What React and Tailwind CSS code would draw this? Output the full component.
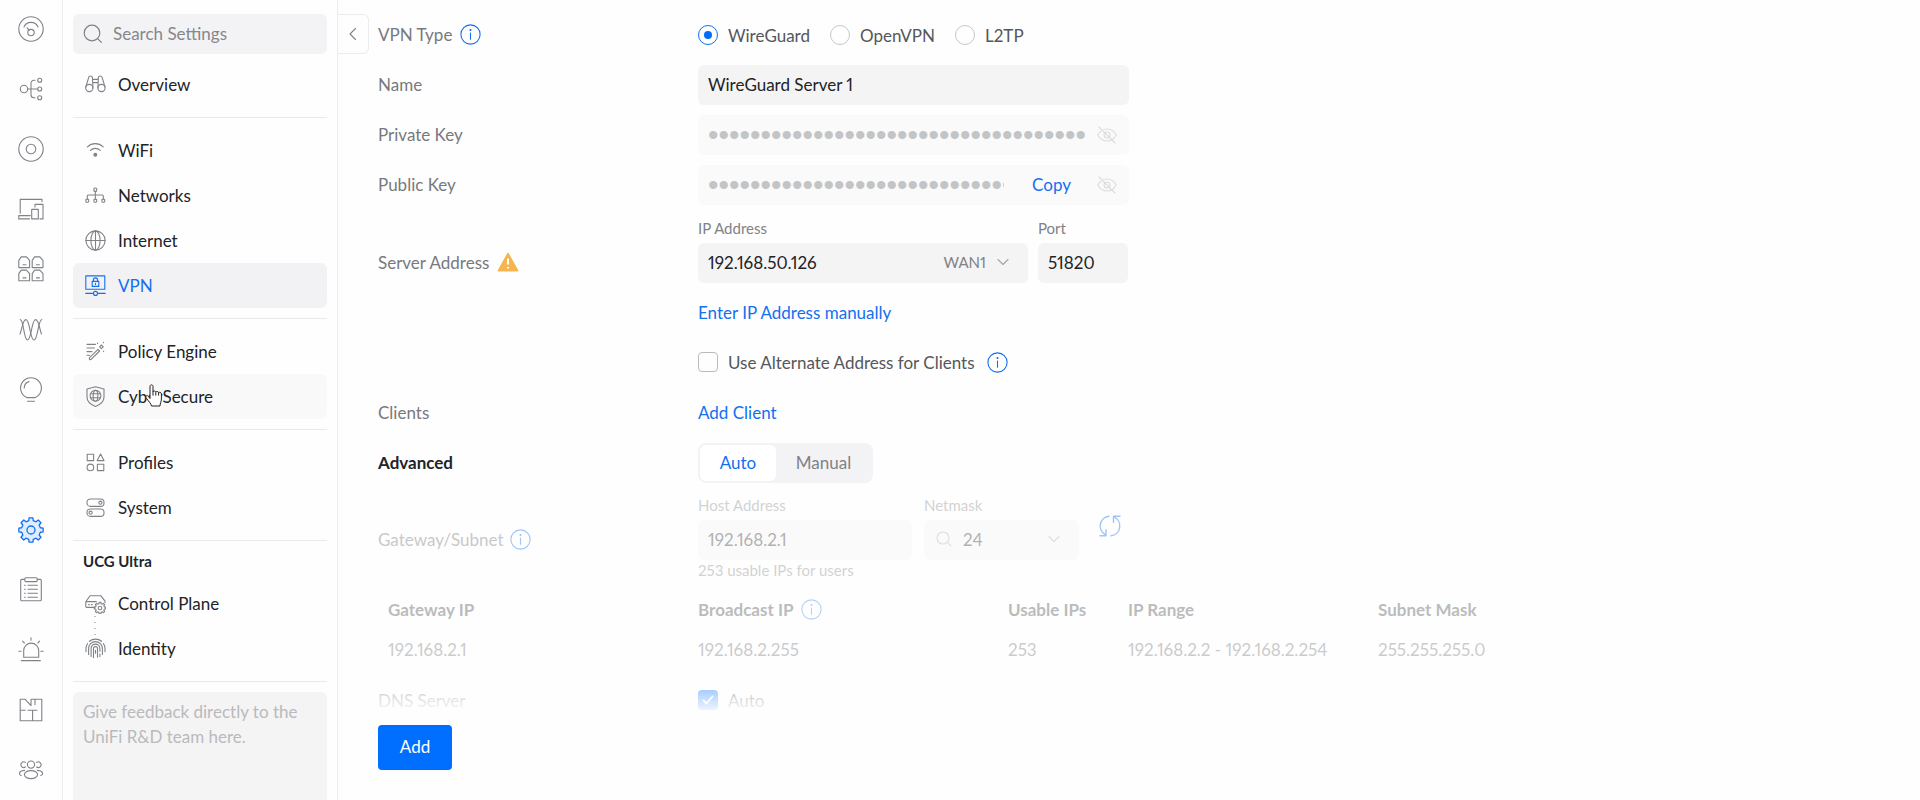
import React from "react";

function Icon({ box = 26, className = "", children, sw = 1.1 }) {
  return (
    <svg
      viewBox={`0 0 ${box} ${box}`}
      width={box}
      height={box}
      fill="none"
      stroke="currentColor"
      strokeWidth={sw}
      strokeLinecap="round"
      strokeLinejoin="round"
      aria-hidden="true"
      className={"shrink-0 " + className}
    >
      {children}
    </svg>
  );
}

function gearPath(c, outer, inner, teeth) {
  const pts = [];
  const step = (Math.PI * 2) / teeth;
  for (let i = 0; i < teeth; i++) {
    const a = i * step - Math.PI / 2;
    [[-0.3, inner], [-0.2, outer], [0.2, outer], [0.3, inner]].forEach(([f, r]) => {
      pts.push(`${(c + Math.cos(a + f * step) * r).toFixed(2)} ${(c + Math.sin(a + f * step) * r).toFixed(2)}`);
    });
  }
  return "M" + pts.join("L") + "Z";
}

const railTop = [
  ["Dashboard", <><circle cx="13" cy="13" r="12.2" /><path d="M6 11A7.6 7.6 0 0 1 20 11M9.2 11.8l1.8 2.4" /><circle cx="13" cy="16.6" r="3.2" /></>],
  ["Topology", <><circle cx="6" cy="13" r="3.7" /><path d="M9.7 13h10M17 4.3h-1a3 3 0 0 0-3 3v11.4a3 3 0 0 0 3 3h1" /><circle cx="21.7" cy="4.3" r="2" /><circle cx="21.7" cy="13" r="2" /><circle cx="21.7" cy="21.7" r="2" /></>],
  ["UniFi Devices", <><circle cx="13" cy="13" r="12.2" /><circle cx="13" cy="13" r="4.8" /></>],
  ["Client Devices", <><path d="M2.2 17.3V3.4H24v2.2M.8 19.6h11.4M.8 19.6v3.3h10.6M17 11V8.4h8v14.5h-3" /><rect x="13.7" y="13.4" width="6.6" height="9.5" /></>],
  ["Ports", <>{[[0, 0], [13.4, 0], [0, 13.2], [13.4, 13.2]].map(([x, y]) => <path key={x + "-" + y} transform={`translate(${x} ${y})`} d="M.8 11.6V4.4L3.2.9h5.2l3.2 3.5v7.2zM5 8.7h3" />)}</>],
  ["Radios", <><path d="M2.200 3.600C6 3.600 5.500 24 9.500 24S13.500 3.600 17.500 3.600c3.500 0 4 10 6 14.400" /><path d="M2 18C4 13.600 4.500 3.600 8 3.600c4 0 4 20.400 8 20.400S20 3.600 23.800 3.600" /></>],
  ["Insights", <><path d="M8.8 21.6A10.4 10.4 0 1 1 17.2 21.6zM9.5 25.2h7" /><path d="M6.2 12A6.8 6.8 0 0 1 11 5.6" /></>],
];

const railBottom = [
  ["Logs", <><rect x="2.7" y="2.4" width="20.6" height="21.4" rx="1" /><rect x="6.8" y=".8" width="12.4" height="3.8" rx="1" fill="#fefefe" /><path d="M10 8.2h9.4M10 12.2h9.4M10 16.2h9.4M10 20.2h9.4M6.4 8.2h.8M6.4 12.2h.8M6.4 16.2h.8M6.4 20.2h.8" /></>],
  ["Alarms", <><path d="M5.7 20.2v-6.6a7.5 7.5 0 0 1 15 0v6.6zM3.4 23.6h19M13 .8v2.4M4.6 4.2l1.8 1.8M21.6 4.2l-1.8 1.8M.8 14.2h2.4M22.8 14.2h2.4" /></>],
  ["Floorplans", <><path d="M7 2.2H2.2v21.6h21.6V2.2H17v5.4M7 2.2l6 6.4V2.2h4M2.2 13.2h5M10 13.2h9M14.6 13.2v10.6" /></>],
  ["People", <><circle cx="13" cy="7.6" r="3.6" /><ellipse cx="13" cy="17.6" rx="6.6" ry="4" /><path d="M7.4 5.4a2.8 2.8 0 1 0 0 4.6M18.6 5.4a2.8 2.8 0 1 1 0 4.6M6.6 13.4c-3 .2-5.2 1.6-5.2 3.4 0 .8.8 1.4 1.8 1.8M19.4 13.4c3 .2 5.2 1.6 5.2 3.4 0 .8-.8 1.4-1.8 1.8" /></>],
];

const overviewIcon = <><circle cx="4.3" cy="14" r="3.6" /><circle cx="16.5" cy="14" r="3.6" /><path d="M.8 13 3.8 3.2C4.2 1.8 7 1.6 7.4 3.2L7.9 14M20 13 17 3.2c-.4-1.4-3.2-1.6-3.6 0L12.9 14M7.6 5.4h5.6M7.7 8.6h5.4" /></>;
const wifiIcon = <><path d="M2.4 6.8a11.4 11.4 0 0 1 15.8 0M5.4 10.4a7 7 0 0 1 9.8 0" /><circle cx="10.3" cy="14.8" r="1.4" fill="currentColor" /></>;
const networksIcon = <><rect x="8.9" y="3" width="2.8" height="3.4" rx="1" /><path d="M10.3 6.4v7.8M2.3 14.2V11c0-.8.2-1 1-1h14c.8 0 1 .2 1 1v3.2" /><rect x=".9" y="14.2" width="2.8" height="3" rx=".6" /><rect x="8.9" y="14.2" width="2.8" height="3" rx=".6" /><rect x="16.9" y="14.2" width="2.8" height="3" rx=".6" /></>;
const internetIcon = <><circle cx="10.5" cy="10.5" r="9.6" /><ellipse cx="10.5" cy="10.5" rx="4.6" ry="9.6" /><path d="M10.5.9v19.2M.9 10.5h19.2" /></>;
const vpnIcon = <><rect x=".8" y=".9" width="19" height="13.4" /><rect x="7.2" y="6.4" width="6.6" height="5" /><path d="M8.4 6.4V5a2.1 2.1 0 0 1 4.2 0v1.4M10.5 8.4v1M.8 18.4h7.6M12.6 18.4h7.6" /><circle cx="10.5" cy="18.4" r="2" /></>;
const policyIcon = <><path d="M2 3.4h8.4M2 7h7.4M2 10.6h5M2 14.2h2.6M4.6 16.6 13 8.4l1.6 1.6-8.4 8.4c-1.2.8-2.6-.6-1.6-1.8zM16.4 4l1.8 1.8-1.8 1.8-1.8-1.8zM12.6 2v.6M18.4 1.4v.4M18.6 10v.4" /></>;
const shieldIcon = <><path d="M10.5.8 19 3v8c0 4.4-3.6 7.6-8.500 9.4C5.600 18.600 2 15.400 2 11V3z" /><circle cx="10.5" cy="9.800" r="5.400" /><ellipse cx="10.500" cy="9.800" rx="2.400" ry="5.400" /><path d="M5.700 7.800h9.600M5.700 11.800h9.600" /></>;
const profilesIcon = <><rect x="2.200" y="2.200" width="6.400" height="6.400" /><path d="m15.600 2 3.400 6.600h-6.800z" /><circle cx="5.400" cy="15.400" r="3.300" /><rect x="12.400" y="12.200" width="6.400" height="6.400" /></>;
const systemIcon = <><rect x="2" y="2" width="17" height="7.400" rx="3.400" /><rect x="2" y="12" width="17" height="7.400" rx="3.400" /><circle cx="15.400" cy="5.700" r="1.600" /><circle cx="5.600" cy="15.700" r="1.600" /></>;
const controlIcon = <><path d="M9 14.400H1.600c-.5 0-.8-.3-.8-.8V8.800L5 2.800h11l4 5.400v1.400M.8 8.600h10.600M3.600 11.600h.8M6.400 11.600h.8" /><path d={gearPath(15, 5.8, 4.5, 8)} /><circle cx="15" cy="15" r="1.800" /></>;
const identityIcon = <><path d="M4.400 3.300a9.800 9.800 0 0 1 12.200 0M1 13.800v-3.300c0-1.800.6-3.600 1.600-5M18.400 5.500c1 1.400 1.600 3.200 1.600 5v3.300M3.600 16.400v-5.900a6.900 6.900 0 0 1 13.800 0v5.900M6.100 18.400v-7.900a4.400 4.400 0 0 1 8.800 0v2.800M8.500 19.600v-9a2 2 0 0 1 4 0v8.600M14.900 16v2.600M10.500 12.200v3" /></>;

function NavItem({ icon, label, state, children }) {
  const tone =
    state === "active" ? "bg-[#f2f2f4] text-[#146ff0]" : state === "hover" ? "bg-[#f9f9fa] text-[#212327]" : "text-[#212327]";
  return (
    <a href="#" className={"relative flex h-[45px] items-center gap-3 rounded-md pl-3 " + tone}>
      <Icon box={21} className={state === "active" ? "" : "text-[#7f8287]"}>{icon}</Icon>
      <span>{label}</span>
      {children}
    </a>
  );
}

function Divider() {
  return <hr className="my-[10px] h-px shrink-0 border-0 bg-[#e9eaeb]" />;
}

function Info() {
  return (
    <Icon box={21} className="text-[#146ff0]">
      <circle cx="10.500" cy="10.500" r="9.600" />
      <path d="M10.500 9v6.200" />
      <circle cx="10.500" cy="6" r=".5" fill="currentColor" />
    </Icon>
  );
}

function Eye() {
  return (
    <button type="button" aria-label="Show key" className="text-[#dcdcdd]">
      <Icon box={20}>
        <path d="M.8 10C3 6 6.200 4 10 4s7 2 9.200 6c-2.200 4-5.400 6-9.200 6S3 14 .8 10zM2 2l16 16" />
        <circle cx="10" cy="10" r="3" />
      </Icon>
    </button>
  );
}

function Chevron({ className = "" }) {
  return (
    <Icon box={14} className={className}>
      <path d="m2 4.500 5 5 5-5" />
    </Icon>
  );
}

function Row({ label, htmlFor, extra, children, align = "items-center" }) {
  return (
    <div className={"flex min-h-10 " + align}>
      <div className="flex h-10 w-80 shrink-0 items-center gap-2 pb-[2px] text-[#77797d]">
        <label htmlFor={htmlFor}>{label}</label>
        {extra}
      </div>
      {children}
    </div>
  );
}

function Radio({ label, checked }) {
  return (
    <label className="flex items-center gap-[10px] text-[#55575b]">
      <input
        type="radio"
        name="vpn-type"
        defaultChecked={checked}
        className="grid size-5 appearance-none place-items-center rounded-full border border-[#c6c7c9] before:size-2 before:rounded-full checked:border-[#146ff0] checked:before:bg-[#006fff]"
      />
      {label}
    </label>
  );
}

const masked = "0".repeat(44);
const keyInput = "h-10 min-w-0 flex-1 bg-transparent font-['Liberation_Sans',sans-serif] text-[30px] leading-[40px] text-[#c3c4c6] outline-none";

export default function App() {
  return (
    <div className="flex h-screen overflow-hidden bg-[#fefefe] font-['Lato',sans-serif] text-[17px] leading-[25px] text-[#212327] proportional-nums">
      <nav aria-label="Applications" className="flex w-[63px] shrink-0 flex-col items-center border-r border-[#ececed] pt-4 pb-[17px] text-[#7f8287]">
        <div className="flex flex-col gap-[34px]">
          {railTop.map(([name, art]) => (
            <a key={name} href="#" aria-label={name}><Icon>{art}</Icon></a>
          ))}
        </div>
        <div className="mt-auto flex flex-col gap-[34px]">
          <a href="#" aria-label="Settings" className="text-[#146ff0]">
            <Icon sw={1.300}>
              <path d={gearPath(13, 12.3, 9.6, 8)} fill="#e0edff" />
              <circle cx="13" cy="13" r="4" />
            </Icon>
          </a>
          {railBottom.map(([name, art]) => (
            <a key={name} href="#" aria-label={name}><Icon>{art}</Icon></a>
          ))}
        </div>
      </nav>

      <aside className="flex w-[275px] shrink-0 flex-col border-r border-[#ececed] px-[10px] pt-[14px]">
        <div className="relative mb-2 shrink-0">
          <Icon box={20} className="absolute top-[10px] left-[10px] text-[#7f8287]" sw={1.200}>
            <circle cx="9" cy="9" r="7.800" />
            <path d="m14.600 14.600 3.800 3.800" />
          </Icon>
          <input
            type="search"
            aria-label="Search Settings"
            placeholder="Search Settings"
            className="h-10 w-full rounded-md bg-[#f3f3f5] pr-3 pb-[2px] pl-10 outline-none placeholder:text-[#85878b]"
          />
        </div>
        <NavItem icon={overviewIcon} label="Overview" />
        <Divider />
        <NavItem icon={wifiIcon} label="WiFi" />
        <NavItem icon={networksIcon} label="Networks" />
        <NavItem icon={internetIcon} label="Internet" />
        <NavItem icon={vpnIcon} label="VPN" state="active" />
        <Divider />
        <NavItem icon={policyIcon} label="Policy Engine" />
        <NavItem icon={shieldIcon} label="CyberSecure" state="hover">
          <svg viewBox="0 0 20 24" width="20" height="24" aria-hidden="true" className="absolute top-[10px] left-[71px]">
            <path
              d="M6 14.500V2.400C6 .4 9 .4 9 2.400V8c0-1.400 2.600-1.400 2.800.2.400-1.200 2.600-1 2.800.6.600-1 2.800-.6 2.800 1.200V15c0 3-1.400 4-1.400 7H7.500c-.4-2.400-2.600-4.400-5.400-8.200C1 12 3 10.800 4.400 12.400z"
              fill="#fff"
              stroke="#222"
              strokeWidth="1"
              strokeLinejoin="round"
            />
            <path d="M9 8v3.600M11.800 8.200v3.400M14.600 8.800v2.800" stroke="#222" strokeWidth="1" />
          </svg>
        </NavItem>
        <Divider />
        <NavItem icon={profilesIcon} label="Profiles" />
        <NavItem icon={systemIcon} label="System" />
        <hr className="mt-[10px] h-px shrink-0 border-0 bg-[#e9eaeb]" />
        <h2 className="flex h-10 shrink-0 items-center pl-[10px] text-[15px] font-bold">UCG Ultra</h2>
        <NavItem icon={controlIcon} label="Control Plane">
          <svg viewBox="0 0 2 20" width="2" height="20" aria-hidden="true" className="absolute top-[35px] left-[21px]">
            <path d="M1 0v20" stroke="#7f8287" strokeWidth="1" strokeDasharray="1 5" />
          </svg>
        </NavItem>
        <NavItem icon={identityIcon} label="Identity" />
        <Divider />
        <textarea
          aria-label="Feedback"
          placeholder="Give feedback directly to the UniFi R&D team here."
          className="min-h-0 flex-1 resize-none rounded-t-md bg-[#f4f4f5] px-[10px] pt-[7px] outline-none placeholder:text-[#b9babc]"
        />
      </aside>

      <main className="flex min-w-0 flex-1">
        <button type="button" aria-label="Collapse settings menu" className="mt-[14px] grid h-10 w-[31px] shrink-0 place-items-center rounded-r-md border border-l-0 border-[#ececed] text-[#7f8287]">
          <Icon box={14}><path d="M9.500 1.500 4 7l5.500 5.500" /></Icon>
        </button>

        <form className="flex min-w-0 flex-1 flex-col pl-[9px]" onSubmit={(e) => e.preventDefault()}>
          <div className="flex min-h-0 flex-1 flex-col gap-[10px] overflow-y-auto pt-[15px] [scrollbar-width:none]">
            <Row label="VPN Type" extra={<Info />}>
              <div className="flex gap-5">
                <Radio label="WireGuard" checked />
                <Radio label="OpenVPN" />
                <Radio label="L2TP" />
              </div>
            </Row>

            <Row label="Name" htmlFor="name">
              <input id="name" defaultValue="WireGuard Server 1" className="h-10 w-[431px] rounded-md bg-[#f4f4f5] px-[10px] pb-[2px] outline-none" />
            </Row>

            <Row label="Private Key" htmlFor="private-key">
              <div className="flex h-10 w-[431px] items-center gap-3 rounded-md bg-[#fafafb] pr-3 pl-[10px]">
                <input id="private-key" type="password" readOnly defaultValue={masked} className={keyInput} />
                <Eye />
              </div>
            </Row>

            <Row label="Public Key" htmlFor="public-key">
              <div className="flex h-10 w-[431px] items-center rounded-md bg-[#fafafb] pr-3 pl-[10px]">
                <input id="public-key" type="password" readOnly defaultValue={masked} className={keyInput} />
                <button type="button" className="mr-[26px] ml-7 pb-[2px] text-[#146ff0]">Copy</button>
                <Eye />
              </div>
            </Row>

            <Row
              label="Server Address"
              htmlFor="ip"
              align="items-end"
              extra={
                <svg viewBox="0 0 22 20" width="22" height="20" aria-hidden="true">
                  <path d="M11 1.500 20.600 18.600H1.400z" fill="#f5b54f" stroke="#f5b54f" strokeWidth="1.600" strokeLinejoin="round" />
                  <path d="M11 6.500v6M11 15v1.400" stroke="#fff" strokeWidth="2" />
                </svg>
              }
            >
              <div className="flex gap-[10px]">
                <div className="flex flex-col">
                  <label htmlFor="ip" className="h-7 text-[15px] leading-[27px] text-[#808286]">IP Address</label>
                  <div className="relative">
                    <select id="ip" className="h-10 w-[330px] appearance-none rounded-md bg-[#f4f4f5] px-[10px] pb-[2px] outline-none">
                      <option>192.168.50.126</option>
                    </select>
                    <div className="pointer-events-none absolute inset-y-0 right-[18px] flex items-center gap-[10px] pb-[2px] text-[15px] text-[#808286]">
                      WAN1
                      <Chevron className="text-[#a5a6a9]" />
                    </div>
                  </div>
                </div>
                <div className="flex flex-col">
                  <label htmlFor="port" className="h-7 text-[15px] leading-[27px] text-[#808286]">Port</label>
                  <input id="port" defaultValue="51820" className="h-10 w-[90px] rounded-md bg-[#f4f4f5] px-[10px] pb-[2px] outline-none" />
                </div>
              </div>
            </Row>

            <div className="flex h-10 shrink-0 items-center pb-[2px] pl-80">
              <a href="#" className="text-[#146ff0]">Enter IP Address manually</a>
            </div>

            <div className="flex h-10 shrink-0 items-center gap-3 pb-[2px] pl-80">
              <label className="flex items-center gap-[10px] text-[#55575b]">
                <input type="checkbox" className="size-5 appearance-none rounded border border-[#b9babc]" />
                Use Alternate Address for Clients
              </label>
              <Info />
            </div>

            <Row label="Clients">
              <a href="#" className="pb-[2px] text-[#146ff0]">Add Client</a>
            </Row>

            <div className="flex h-10 shrink-0 items-center">
              <h3 className="w-80 shrink-0 pb-[2px] font-bold">Advanced</h3>
              <div className="flex h-10 rounded-lg bg-[#f3f3f5] p-[2px]">
                <button type="button" aria-pressed="true" className="w-[76px] rounded-md bg-white pb-[2px] text-[#146ff0]">Auto</button>
                <button type="button" aria-pressed="false" className="w-[95px] pb-[2px] text-[#808286]">Manual</button>
              </div>
            </div>

            <fieldset disabled className="flex flex-col gap-[10px]">
              <div className="flex">
                <div className="mt-[27px] flex h-10 w-80 shrink-0 items-center gap-[6px] pb-[2px] text-[#77797d] opacity-40">
                  <label htmlFor="host">Gateway/Subnet</label>
                  <Info />
                </div>
                <div className="flex gap-3">
                  <div className="flex flex-col opacity-35">
                    <label htmlFor="host" className="h-[27px] text-[15px] text-[#808286]">Host Address</label>
                    <input id="host" defaultValue="192.168.2.1" className="h-10 w-[214px] rounded-md bg-[#f4f4f5] px-[10px] pb-[2px] outline-none" />
                    <p className="text-[15px] leading-[20px] text-[#808286]">253 usable IPs for users</p>
                  </div>
                  <div className="flex flex-col opacity-35">
                    <label htmlFor="netmask" className="h-[27px] text-[15px] text-[#808286]">Netmask</label>
                    <div className="relative">
                      <select id="netmask" className="h-10 w-[155px] appearance-none rounded-md bg-[#f4f4f5] pb-[2px] pl-[39px] opacity-100 outline-none">
                        <option>24</option>
                      </select>
                      <div className="pointer-events-none absolute inset-0 flex items-center justify-between pr-[18px] pb-[2px] pl-3 text-[#a5a6a9]">
                        <Icon box={16}><circle cx="7" cy="7" r="6" /><path d="m11.400 11.400 3.400 3.400" /></Icon>
                        <Chevron />
                      </div>
                    </div>
                  </div>
                  <button type="button" aria-label="Refresh subnet" className="ml-2 flex h-[66px] items-center text-[#146ff0] opacity-40">
                    <Icon box={22} sw={1.400}>
                      <path d="M10 1.250A9.800 9.800 0 0 0 6.600 19.760M15.400 2.240A9.800 9.800 0 0 1 12 20.750M1 20.750h6v-6M21 1.250h-6.500v6" />
                    </Icon>
                  </button>
                </div>
              </div>

              <table className="w-[1200px] max-w-full table-fixed text-left opacity-30">
                <colgroup>
                  <col className="w-80" /><col className="w-[310px]" /><col className="w-[120px]" /><col className="w-[250px]" /><col />
                </colgroup>
                <thead>
                  <tr className="h-10">
                    <th className="pb-[2px] pl-[10px]">Gateway IP</th>
                    <th className="pb-[2px]"><span className="flex items-center gap-2">Broadcast IP <Info /></span></th>
                    <th className="pb-[2px]">Usable IPs</th>
                    <th className="pb-[2px]">IP Range</th>
                    <th className="pb-[2px]">Subnet Mask</th>
                  </tr>
                </thead>
                <tbody>
                  <tr className="h-10 text-[#55575b]">
                    <td className="pb-[2px] pl-[10px]">192.168.2.1</td>
                    <td className="pb-[2px]">192.168.2.255</td>
                    <td className="pb-[2px]">253</td>
                    <td className="pb-[2px]">192.168.2.2 - 192.168.2.254</td>
                    <td className="pb-[2px]">255.255.255.0</td>
                  </tr>
                </tbody>
              </table>

              <div className="flex h-10 items-center opacity-40">
                <span className="w-80 shrink-0 text-[#77797d]">DNS Server</span>
                <label className="flex items-center gap-[10px] text-[#55575b]">
                  <span className="grid size-5">
                    <input type="checkbox" defaultChecked className="col-start-1 row-start-1 size-5 appearance-none rounded bg-[#006fff]" />
                    <Icon box={20} sw={1.800} className="pointer-events-none col-start-1 row-start-1 text-white"><path d="m5.500 10.500 3 3 6-7" /></Icon>
                  </span>
                  Auto
                </label>
              </div>
            </fieldset>
          </div>

          <footer className="relative shrink-0 pt-1 pb-[30px]">
            <div className="pointer-events-none absolute inset-x-0 -top-9 h-10 bg-gradient-to-b from-transparent to-[#fefefe] to-75%" />
            <button type="submit" className="h-[45px] w-[74px] rounded bg-[#006fff] pb-[2px] text-white">Add</button>
          </footer>
        </form>
      </main>
    </div>
  );
}
